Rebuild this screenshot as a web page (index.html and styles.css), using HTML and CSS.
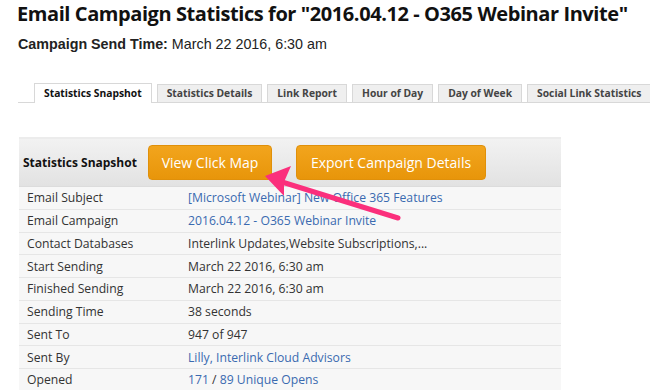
FILE: index.html
```html
<!DOCTYPE html>
<html>
<head>
<meta charset="utf-8">
<link rel="stylesheet" href="styles.css">
</head>
<body>
<div class="page">
  <h1 class="title">Email Campaign Statistics for "2016.04.12 - O365 Webinar Invite"</h1>
  <p class="sendtime"><b>Campaign Send Time:</b> March 22 2016, 6:30 am</p>
  <div class="tabs">
    <span class="tab active">Statistics Snapshot</span>
    <span class="tab">Statistics Details</span>
    <span class="tab">Link Report</span>
    <span class="tab">Hour of Day</span>
    <span class="tab">Day of Week</span>
    <span class="tab">Social Link Statistics</span>
  </div>
  <div class="panel">
    <div class="panel-head">
      <span class="panel-title">Statistics Snapshot</span>
      <span class="btn btn-map">View Click Map</span>
      <span class="btn btn-export">Export Campaign Details</span>
    </div>
    <div class="row"><span class="lbl">Email Subject</span><span class="val link">[Microsoft Webinar] New Office 365 Features</span></div>
    <div class="row"><span class="lbl">Email Campaign</span><span class="val link">2016.04.12 - O365 Webinar Invite</span></div>
    <div class="row"><span class="lbl">Contact Databases</span><span class="val">Interlink Updates,Website Subscriptions,...</span></div>
    <div class="row"><span class="lbl">Start Sending</span><span class="val">March 22 2016, 6:30 am</span></div>
    <div class="row"><span class="lbl">Finished Sending</span><span class="val">March 22 2016, 6:30 am</span></div>
    <div class="row"><span class="lbl">Sending Time</span><span class="val">38 seconds</span></div>
    <div class="row"><span class="lbl">Sent To</span><span class="val">947 of 947</span></div>
    <div class="row"><span class="lbl">Sent By</span><span class="val link">Lilly, Interlink Cloud Advisors</span></div>
    <div class="row"><span class="lbl">Opened</span><span class="val"><span class="link">171</span> / <span class="link">89 Unique Opens</span></span></div>
  </div>
  <svg class="arrow" width="160" height="70" viewBox="0 0 160 70">
    <line x1="138" y1="58" x2="22" y2="22" stroke="#fb2f7c" stroke-width="5" stroke-linecap="round"/>
    <polygon points="5,16 31,6 24,22 24,36" fill="#fb2f7c"/>
  </svg>
</div>
</body>
</html>
```

FILE: styles.css
```css
html, body {
  margin: 0;
  padding: 0;
  background: #fff;
}
.page {
  position: relative;
  width: 650px;
  height: 390px;
  overflow: hidden;
  font-family: "Open Sans", sans-serif;
  color: #222;
}
.title {
  margin: 0;
  padding: 0 0 0 17px;
  font-family: "Open Sans", sans-serif;
  font-weight: 700;
  font-size: 20px;
  line-height: 28px;
  color: #111;
  letter-spacing: -0.42px;
  white-space: nowrap;
}
.sendtime {
  margin: 7px 0 0 18px;
  font-family: "Liberation Sans", Arial, sans-serif;
  font-size: 14.3px;
  line-height: 18px;
  color: #222;
}
.tabs {
  display: flex;
  gap: 5px;
  margin: 30px 0 0 18px;
  padding-left: 16px;
  border-bottom: 1px solid #d8d8d8;
  height: 19px;
  align-items: flex-end;
}
.tab {
  display: block;
  height: 18px;
  box-sizing: border-box;
  padding: 0 9px;
  border: 1px solid #d8d8d8;
  border-bottom: none;
  background: #efefef;
  font-size: 10.3px;
  font-weight: 700;
  line-height: 17px;
  color: #444;
  white-space: nowrap;
}
.tab.active {
  background: #fff;
  color: #111;
  height: 20px;
  line-height: 19px;
  margin-bottom: -1px;
}
.panel {
  margin: 34px 0 0 19px;
  width: 542px;
  border-top: 2px solid #ececec;
}
.panel-head {
  display: flex;
  align-items: center;
  height: 47px;
  background: linear-gradient(#f2f2f2, #e2e2e2);
  border-bottom: 1px solid #dcdcdc;
  padding-left: 4px;
}
.panel-title {
  font-weight: 700;
  font-size: 12px;
  color: #111;
  width: 125px;
}
.btn {
  display: block;
  height: 35px;
  box-sizing: border-box;
  line-height: 33px;
  border-radius: 4px;
  background: linear-gradient(#f2a51d, #e8950a);
  color: #fff;
  font-size: 14px;
  border: 1px solid #e0900a;
  white-space: nowrap;
  text-align: center;
}
.btn-map {
  width: 124px;
}
.btn-export {
  margin-left: 24px;
  width: 190px;
}
.row {
  display: flex;
  height: 22.75px;
  box-sizing: border-box;
  align-items: center;
  background: #f7f7f7;
  border-bottom: 1px solid #e6e6e6;
  font-size: 12.2px;
  color: #333;
}
.lbl {
  width: 169px;
  padding-left: 8px;
  box-sizing: border-box;
  white-space: nowrap;
}
.val {
  white-space: nowrap;
}
.link {
  color: #3a6ab0;
}
.arrow {
  position: absolute;
  left: 260px;
  top: 160px;
}
```
